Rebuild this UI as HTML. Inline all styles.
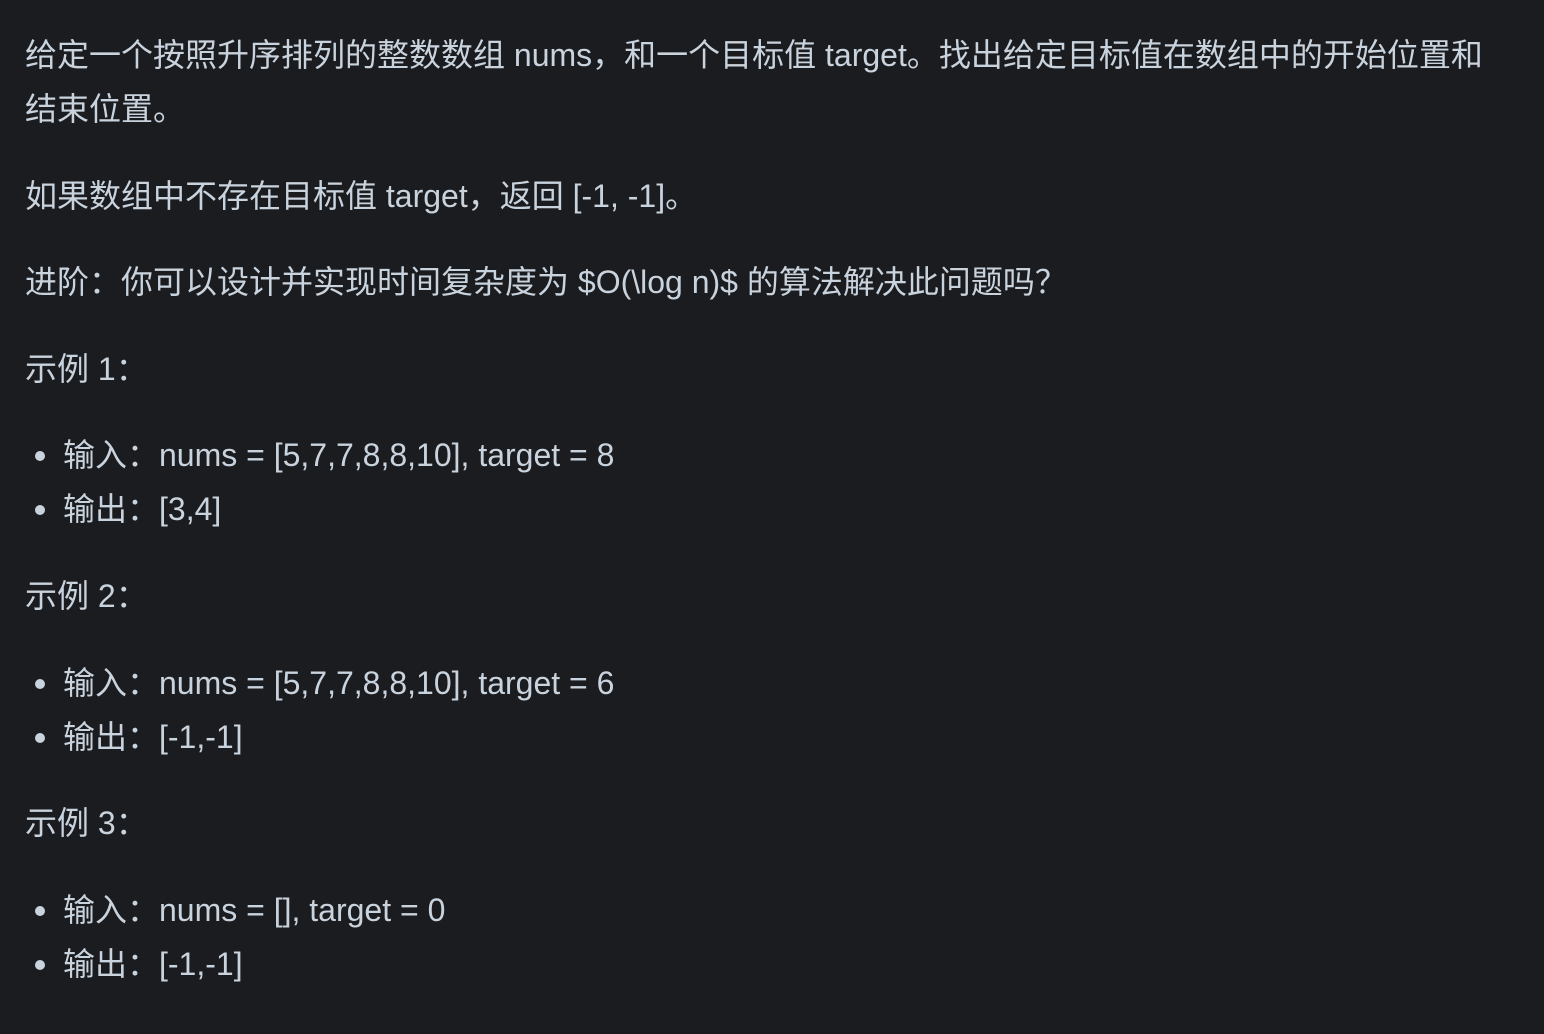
<!DOCTYPE html>
<html><head><meta charset="utf-8"><style>
html,body{margin:0;padding:0;background:#1b1c1f;}
body{width:1544px;height:1034px;overflow:hidden;font-family:"Liberation Sans","Noto Sans CJK SC",sans-serif;font-size:32px;line-height:54px;color:#c9d3de;}
.c{padding:28px 25px 0 25px;width:1475px;}
p{margin:0 0 32.6px 0;}
ul{margin:0 0 32.6px 0;padding:0;list-style:none;}
li{position:relative;padding-left:38px;}
li:before{content:"";position:absolute;left:10px;top:23px;width:10px;height:10px;border-radius:50%;background:#c9d3de;}
</style></head><body><div class="c">
<p>给定一个按照升序排列的整数数组 nums，和一个目标值 target。找出给定目标值在数组中的开始位置和结束位置。</p>
<p>如果数组中不存在目标值 target，返回 [-1, -1]。</p>
<p>进阶：你可以设计并实现时间复杂度为 $O(\log n)$ 的算法解决此问题吗？</p>
<p>示例 1：</p>
<ul><li>输入：nums = [5,7,7,8,8,10], target = 8</li><li>输出：[3,4]</li></ul>
<p>示例 2：</p>
<ul><li>输入：nums = [5,7,7,8,8,10], target = 6</li><li>输出：[-1,-1]</li></ul>
<p>示例 3：</p>
<ul><li>输入：nums = [], target = 0</li><li>输出：[-1,-1]</li></ul>
</div></body></html>
